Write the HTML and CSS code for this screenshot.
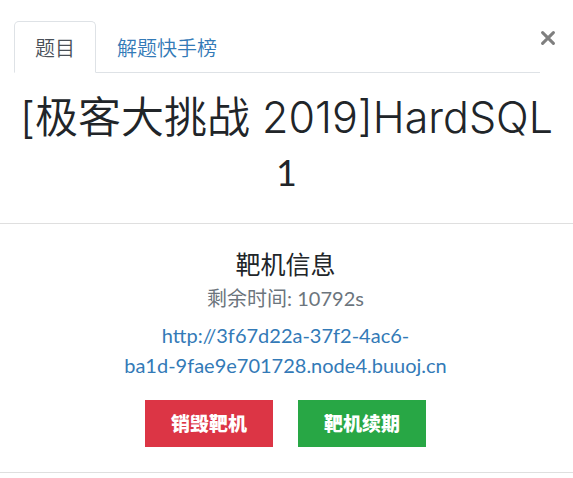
FILE: index.html
```html
<!DOCTYPE html>
<html lang="zh-CN">
<head>
  <meta charset="utf-8">
  <meta name="viewport" content="width=device-width, initial-scale=1">
  <title>HardSQL</title>
  <link rel="stylesheet" href="styles.css">
</head>
<body>
  <main class="challenge">
    <header class="top">
      <nav class="tabs">
        <a class="tab tab-active" href="#challenge">题目</a>
        <a class="tab" href="#solves">解题快手榜</a>
      </nav>
      <button class="close" type="button" aria-label="关闭">
        <svg viewBox="0 0 16 14" width="16" height="14" aria-hidden="true">
          <path d="M2.6 1.6 13.4 12.4M13.4 1.6 2.6 12.4" fill="none" stroke="currentColor" stroke-width="3" stroke-linecap="round"/>
        </svg>
      </button>
    </header>
    <section class="heading" id="challenge">
      <h1 class="name">[极客大挑战 2019]HardSQL</h1>
      <p class="value">1</p>
    </section>
    <section class="instance">
      <h2 class="instance-title">靶机信息</h2>
      <p class="time">剩余时间: 10792s</p>
      <p class="address"><a href="#instance">http://3f67d22a-37f2-4ac6-<br>ba1d-9fae9e701728.node4.buuoj.cn</a></p>
      <div class="actions">
        <button class="btn btn-danger" type="button">销毁靶机</button>
        <button class="btn btn-success" type="button">靶机续期</button>
      </div>
    </section>
  </main>
</body>
</html>
```
FILE: styles.css
```css
* {
  box-sizing: border-box;
}

body {
  margin: 0;
  background: #fff;
  color: #212529;
  font-family: Lato, "Noto Sans CJK SC", sans-serif;
  font-size: 20px;
  line-height: 30px;
}

h1,
h2,
p {
  margin: 0;
}

a {
  color: #337ab7;
  text-decoration: none;
}

.top {
  display: flex;
  align-items: flex-start;
  padding: 21px 17px 0 14px;
}

.tabs {
  display: flex;
  flex: 1;
  border-bottom: 1px solid #dee2e6;
}

.tab {
  margin-bottom: -1px;
  padding: 11px 20px 9px;
  border: 1px solid transparent;
  border-radius: 5px 5px 0 0;
  font-weight: 350;
}

.tab-active {
  border-color: #dee2e6 #dee2e6 #fff;
  background: #fff;
  color: #495057;
}

.close {
  display: flex;
  margin-top: 10px;
  padding: 0;
  border: 0;
  background: none;
  color: #7f7f7f;
}

.heading {
  padding: 14px 15px 26px;
  border-bottom: 1px solid #dfdfdf;
  text-align: center;
}

.name {
  font-family: Inter, "Noto Sans CJK SC", sans-serif;
  font-size: 43px;
  font-weight: 350;
  line-height: 60px;
  white-space: nowrap;
}

.value {
  font-size: 36px;
  line-height: 50px;
}

.instance {
  padding: 22px 16px 25px 14px;
  border-bottom: 1px solid #dfdfdf;
  text-align: center;
}

.instance-title {
  font-size: 25px;
  font-weight: 400;
  line-height: 37px;
}

.time {
  margin-bottom: 7px;
  color: #6c757d;
}

.actions {
  display: flex;
  justify-content: center;
  gap: 25px;
  margin-top: 20px;
}

.btn {
  padding: 8px 25px;
  border: 1px solid;
  color: #fff;
  font: inherit;
  font-size: 19px;
  font-weight: 900;
  line-height: 29px;
}

.btn-danger {
  border-color: #dc3545;
  background: #dc3545;
}

.btn-success {
  border-color: #28a745;
  background: #28a745;
}
```
